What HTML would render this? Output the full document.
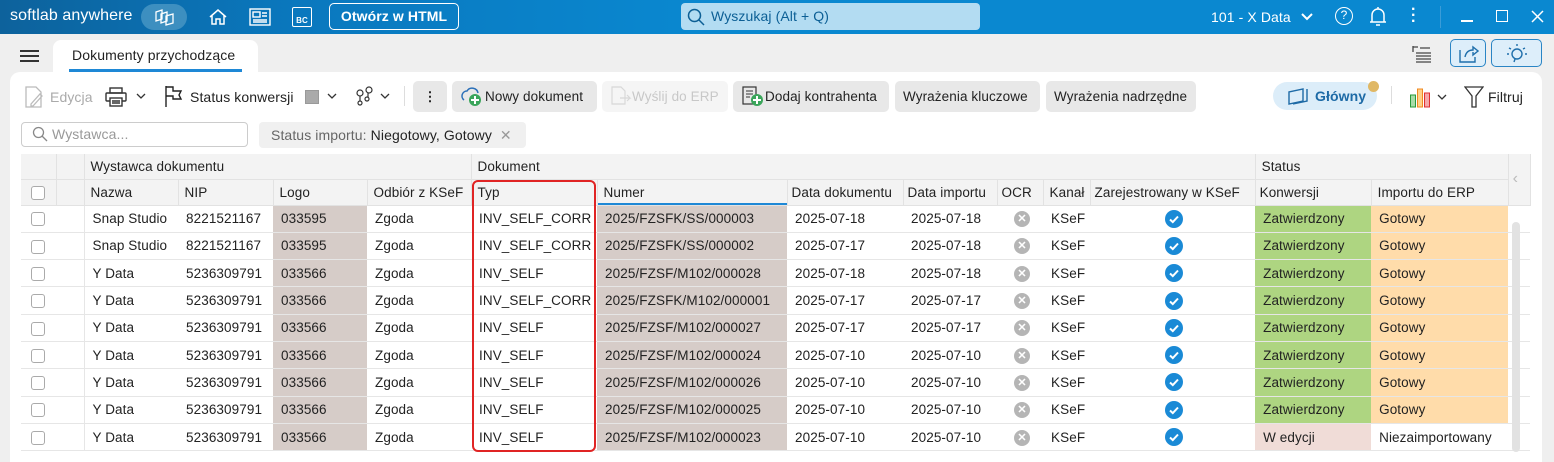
<!DOCTYPE html>
<html><head><meta charset="utf-8"><style>
*{box-sizing:border-box;margin:0;padding:0}
body{width:1554px;height:452px;overflow:hidden;background:#efefef;font-family:"Liberation Sans",sans-serif;font-size:13px;color:#222;position:relative;letter-spacing:0.1px}
.tb{position:absolute;left:0;top:0;width:1554px;height:34px;background:linear-gradient(90deg,#0d629c 0,#0a78be 300px,#0a88d0 700px,#0a88d0);color:#fff}
.abs{position:absolute}
.panel{position:absolute;left:10px;top:72px;width:1532px;height:390px;background:#fff;border-radius:10px 10px 0 0}
.btn{position:absolute;top:81px;height:31px;background:#e8e8e8;border-radius:5px;font-size:13.5px;line-height:31px;padding:0 8px;white-space:nowrap;overflow:hidden}
table{position:absolute;left:21px;top:154px;border-collapse:collapse;table-layout:fixed;width:1509px}
td{height:27.3px;border-bottom:1px solid #e6e6e6;padding-left:8px;white-space:nowrap;overflow:hidden;font-size:13.5px}
.h td{background:#f3f3f3;border-right:1px solid #e2e2e2;border-bottom:1px solid #e2e2e2;height:25.5px;padding-left:6px}
.g{background:#d6ccc8}
.k{background:#aed581}
.i{background:#ffdcaa}
.w{background:#f0dcd7}
.cb{display:inline-block;width:14px;height:14px;border:1px solid #aaa;border-radius:3px;margin-left:1px;vertical-align:middle}
.x{display:inline-block;width:16px;height:16px;border-radius:50%;background:#b5b5b5;color:#fff;font-size:11px;line-height:16px;text-align:center;font-weight:bold}
.ok{display:inline-block;vertical-align:middle}
</style></head><body>
<svg width="0" height="0" style="position:absolute"><defs><symbol id="ok" viewBox="0 0 18 18"><circle cx="9" cy="9" r="9" fill="#1a8ad6"/><path d="M5 9.5l2.8 2.6L13 6.5" fill="none" stroke="#fff" stroke-width="2"/></symbol></defs></svg>
<div class="tb">
 <div class="abs" style="left:10px;top:7px;font-size:16px">softlab anywhere</div>
 <div class="abs" style="left:141px;top:4px;width:46px;height:26px;border-radius:13px;background:#3d8fc0"></div>
 <svg class="abs" style="left:153px;top:7px" width="22" height="20" fill="none" stroke="#fff" stroke-width="1.3"><path d="M3 14V5l6-2v9zM8 16V7l6-2v9zM13 18V9l7-2v9z"/></svg>
 <svg class="abs" style="left:208px;top:7px" width="20" height="20" fill="none" stroke="#fff" stroke-width="1.5"><path d="M2 10 10 3l8 7M4 8v9h4v-5h4v5h4V8"/></svg>
 <svg class="abs" style="left:249px;top:8px" width="22" height="18" fill="none" stroke="#fff" stroke-width="1.4"><rect x="1" y="1" width="20" height="16"/><rect x="4" y="4" width="7" height="5"/><path d="M13 5h5M13 8h5M4 12h14M4 14h14"/></svg>
 <div class="abs" style="left:292px;top:7px;width:20px;height:20px;border:1.4px solid #fff;border-radius:2px;font-size:8px;font-weight:bold;text-align:center;line-height:26px">BC</div>
 <div class="abs" style="left:329px;top:3px;width:130px;height:27px;border:1.5px solid #fff;border-radius:5px;font-weight:bold;font-size:14px;text-align:center;line-height:24px">Otwórz w HTML</div>
 <div class="abs" style="left:681px;top:3px;width:299px;height:27px;background:#b3dcf2;border-radius:4px;color:#0c5f95;font-size:14px;line-height:27px;padding-left:30px">Wyszukaj (Alt + Q)</div>
 <svg class="abs" style="left:687px;top:8px" width="18" height="18" fill="none" stroke="#0c5f95" stroke-width="1.5"><circle cx="7.5" cy="7.5" r="6"/><path d="M12 12l5 5"/></svg>
 <div class="abs" style="left:1211px;top:9px;font-size:14px">101 - X Data</div>
 <svg class="abs" style="left:1301px;top:13px" width="12" height="8" fill="none" stroke="#fff" stroke-width="2"><path d="M1 1l5 5 5-5"/></svg>
 <div class="abs" style="left:1335px;top:7px;width:18px;height:18px;border:1.5px solid #fff;border-radius:50%;font-size:12px;text-align:center;line-height:15px">?</div>
 <svg class="abs" style="left:1369px;top:6px" width="18" height="21" fill="none" stroke="#fff" stroke-width="1.5"><path d="M3 16V9a6 6 0 0 1 12 0v7zM1 16h16M7 19h4M9 1v2"/></svg>
 <div class="abs" style="left:1411px;top:7px;width:3px;line-height:6px;font-size:16px;font-weight:bold">·<br>·<br>·</div>
 <div class="abs" style="left:1440px;top:6px;width:1px;height:22px;background:#3a9cd8"></div>
 <div class="abs" style="left:1461px;top:20px;width:12px;height:1.5px;background:#fff"></div>
 <div class="abs" style="left:1496px;top:10px;width:12px;height:12px;border:1.5px solid #fff"></div>
 <svg class="abs" style="left:1531px;top:10px" width="13" height="13" stroke="#fff" stroke-width="1.5"><path d="M1 1l11 11M12 1 1 12"/></svg>
</div>
<svg class="abs" style="left:20px;top:49px" width="19" height="14" stroke="#333" stroke-width="2"><path d="M0 2h19M0 7h19M0 12h19"/></svg>
<div class="abs" style="left:53px;top:40px;width:205px;height:34px;background:#fff;border-radius:8px 8px 0 0"></div>
<div class="abs" style="left:72px;top:47px;font-size:14px">Dokumenty przychodzące</div>
<div class="abs" style="left:69px;top:69px;width:173px;height:3px;background:#1e88d6"></div>
<svg class="abs" style="left:1412px;top:45px" width="20" height="18" stroke="#444" stroke-width="1.3"><path d="M1 2h5M1 1v6M8 3h10M4 8h15M4 11h15M4 14h15M4 17h15"/></svg>
<div class="abs" style="left:1450px;top:39px;width:36px;height:28px;border:1.5px solid #2a85c5;border-radius:5px;background:#ddeefa"></div>
<svg class="abs" style="left:1459px;top:45px" width="20" height="18" fill="none" stroke="#1f6fab" stroke-width="1.4"><path d="M1 5v12h15v-5M6 12c1-5 4-7 8-7V2l5 4-5 4V7"/></svg>
<div class="abs" style="left:1491px;top:39px;width:51px;height:28px;border:1.5px solid #2a85c5;border-radius:5px;background:#ddeefa"></div>
<svg class="abs" style="left:1505px;top:42px" width="24" height="22" fill="none" stroke="#1f6fab" stroke-width="1.4"><circle cx="12" cy="12" r="5"/><path d="M12 2v2M4 6l2 1M20 6l-2 1M2 12h2M20 12h2M10 17l-1 3"/></svg>
<div class="panel"></div>
<svg class="abs" style="left:24px;top:86px" width="20" height="22" fill="none" stroke="#bbb" stroke-width="1.3"><path d="M2 1h10l5 5v15H2zM7 18l9-10 2 2-9 10H7z"/></svg>
<div class="abs" style="left:50px;top:89px;color:#aaa;font-size:14px">Edycja</div>
<svg class="abs" style="left:105px;top:86px" width="22" height="22" fill="none" stroke="#333" stroke-width="1.4"><rect x="5" y="2" width="12" height="5"/><rect x="1" y="7" width="20" height="8" rx="1"/><rect x="5" y="12" width="12" height="8" fill="#fff"/><path d="M7 15h8M7 17h8"/></svg>
<svg class="abs" style="left:136px;top:93px" width="10" height="7" fill="none" stroke="#333" stroke-width="1.3"><path d="M1 1l4 4 4-4"/></svg>
<svg class="abs" style="left:164px;top:85px" width="20" height="23" fill="none" stroke="#222" stroke-width="1.4"><path d="M2 1v21M2 2h7v4h8l-2 4 2 4H9v-3H2"/></svg>
<div class="abs" style="left:190px;top:89px;font-size:14px">Status konwersji</div>
<div class="abs" style="left:305px;top:90px;width:14px;height:14px;background:#aaa;border:1px solid #999"></div>
<svg class="abs" style="left:327px;top:93px" width="10" height="7" fill="none" stroke="#333" stroke-width="1.3"><path d="M1 1l4 4 4-4"/></svg>
<svg class="abs" style="left:355px;top:85px" width="20" height="23" fill="none" stroke="#333" stroke-width="1.2"><circle cx="5" cy="8" r="3"/><circle cx="14" cy="5" r="3"/><circle cx="5" cy="18" r="2"/><circle cx="12" cy="14" r="2"/><path d="M5 11v5M13 8v4"/></svg>
<svg class="abs" style="left:380px;top:93px" width="10" height="7" fill="none" stroke="#333" stroke-width="1.3"><path d="M1 1l4 4 4-4"/></svg>
<div class="abs" style="left:404px;top:86px;width:1px;height:20px;background:#ddd"></div>
<div class="btn" style="left:413px;width:34px;text-align:center;font-weight:bold">⋮</div>
<div class="btn" style="left:452px;width:145px;padding-left:33px">Nowy dokument</div>
<svg class="abs" style="left:460px;top:85px" width="24" height="22"><path d="M4 15a5 5 0 0 1 3-9 6 6 0 0 1 11 2" fill="none" stroke="#2a6fb8" stroke-width="1.5"/><circle cx="15" cy="15" r="6" fill="#3aa55a"/><path d="M15 11v8M11 15h8" stroke="#fff" stroke-width="2"/></svg>
<div class="btn" style="left:602px;width:126px;background:#f5f5f5;color:#c8c8c8;padding-left:30px">Wyślij do ERP</div>
<svg class="abs" style="left:610px;top:86px" width="22" height="20" fill="none" stroke="#d8d8d8" stroke-width="1.2"><path d="M2 1h9l4 4v13H2zM10 12h10l-3-3M20 12l-3 3"/></svg>
<div class="btn" style="left:733px;width:156px;padding-left:32px">Dodaj kontrahenta</div>
<svg class="abs" style="left:741px;top:85px" width="24" height="22"><rect x="2" y="2" width="13" height="17" fill="none" stroke="#333" stroke-width="1.2"/><path d="M5 6h7M5 9h7M5 12h4" stroke="#333"/><circle cx="16" cy="15" r="6" fill="#3aa55a"/><path d="M16 11v8M12 15h8" stroke="#fff" stroke-width="2"/></svg>
<div class="btn" style="left:895px;width:145px">Wyrażenia kluczowe</div>
<div class="btn" style="left:1046px;width:150px">Wyrażenia nadrzędne</div>
<div class="abs" style="left:1273px;top:82px;width:104px;height:28px;background:#dcedf9;border-radius:14px;color:#1d6aa6;font-weight:bold;font-size:14px;line-height:28px;padding-left:42px">Główny</div>
<svg class="abs" style="left:1285px;top:86px" width="26" height="20" fill="none" stroke="#1d6aa6" stroke-width="1.4"><path d="M4 18V6l14-3v12zM8 18l14-3V3"/></svg>
<div class="abs" style="left:1368px;top:81px;width:11px;height:11px;border-radius:50%;background:#e0b865"></div>
<div class="abs" style="left:1391px;top:86px;width:1px;height:18px;background:#ddd"></div>
<svg class="abs" style="left:1409px;top:86px" width="22" height="22"><rect x="1.5" y="9" width="5" height="12" fill="#a8dca8" stroke="#2a9a3a"/><rect x="8.5" y="3" width="5" height="18" fill="#ffd08a" stroke="#f08a20"/><rect x="15.5" y="7" width="5" height="14" fill="#f5a8a8" stroke="#e03030"/></svg>
<svg class="abs" style="left:1437px;top:94px" width="10" height="7" fill="none" stroke="#333" stroke-width="1.3"><path d="M1 1l4 4 4-4"/></svg>
<svg class="abs" style="left:1464px;top:86px" width="20" height="22" fill="none" stroke="#333" stroke-width="1.3"><path d="M1 1h18l-7 9v11h-4V10z"/></svg>
<div class="abs" style="left:1488px;top:89px;font-size:14px">Filtruj</div>
<div class="abs" style="left:21px;top:122px;width:227px;height:25px;border:1px solid #ccc;border-radius:4px;color:#999;font-size:14px;line-height:23px;padding-left:30px">Wystawca...</div>
<svg class="abs" style="left:32px;top:126px" width="16" height="16" fill="none" stroke="#888" stroke-width="1.3"><circle cx="6.5" cy="6.5" r="5"/><path d="M10 10l5 5"/></svg>
<div class="abs" style="left:259px;top:122px;width:267px;height:26px;background:#f0f0f0;border-radius:4px;font-size:14px;line-height:26px;padding-left:12px;white-space:nowrap"><span style="color:#666">Status importu: </span>Niegotowy, Gotowy <span style="color:#999;margin-left:4px">✕</span></div>
<table>
<colgroup><col style="width:35px"><col style="width:28px"><col style="width:94px"><col style="width:95px"><col style="width:94px"><col style="width:104px"><col style="width:126px"><col style="width:190px"><col style="width:116px"><col style="width:94px"><col style="width:46px"><col style="width:47px"><col style="width:165px"><col style="width:116px"><col style="width:137px"><col style="width:22px"></colgroup>
<tr class="h"><td></td><td></td><td colspan="4">Wystawca dokumentu</td><td colspan="7">Dokument</td><td colspan="2">Status</td><td rowspan="2" style="color:#bbb;font-size:16px;padding-left:4px">‹</td></tr>
<tr class="h"><td style="padding-left:9px"><span class="cb" style="background:#fff"></span></td><td></td><td>Nazwa</td><td>NIP</td><td>Logo</td><td>Odbiór z KSeF</td><td>Typ</td><td style="box-shadow:inset 0 -2px #1e88d6">Numer</td><td style="padding-left:4px">Data dokumentu</td><td style="padding-left:4px">Data importu</td><td style="padding-left:4px">OCR</td><td>Kanał</td><td style="padding-left:4px">Zarejestrowany w KSeF</td><td style="padding-left:4px">Konwersji</td><td>Importu do ERP</td></tr>
<tr><td style="padding-left:9px"><span class="cb"></span></td><td style="border-right:1px solid #e6e6e6"></td><td>Snap Studio</td><td>8221521167</td><td class="g">033595</td><td>Zgoda</td><td>INV_SELF_CORR</td><td class="g">2025/FZSFK/SS/000003</td><td>2025-07-18</td><td>2025-07-18</td><td style="padding-left:17px"><span class="x">✕</span></td><td>KSeF</td><td style="padding-left:75px"><svg class="ok" width="18" height="18"><use href="#ok"/></svg></td><td class="k">Zatwierdzony</td><td class="i">Gotowy</td><td></td></tr>
<tr><td style="padding-left:9px"><span class="cb"></span></td><td style="border-right:1px solid #e6e6e6"></td><td>Snap Studio</td><td>8221521167</td><td class="g">033595</td><td>Zgoda</td><td>INV_SELF_CORR</td><td class="g">2025/FZSFK/SS/000002</td><td>2025-07-17</td><td>2025-07-18</td><td style="padding-left:17px"><span class="x">✕</span></td><td>KSeF</td><td style="padding-left:75px"><svg class="ok" width="18" height="18"><use href="#ok"/></svg></td><td class="k">Zatwierdzony</td><td class="i">Gotowy</td><td></td></tr>
<tr><td style="padding-left:9px"><span class="cb"></span></td><td style="border-right:1px solid #e6e6e6"></td><td>Y Data</td><td>5236309791</td><td class="g">033566</td><td>Zgoda</td><td>INV_SELF</td><td class="g">2025/FZSF/M102/000028</td><td>2025-07-18</td><td>2025-07-18</td><td style="padding-left:17px"><span class="x">✕</span></td><td>KSeF</td><td style="padding-left:75px"><svg class="ok" width="18" height="18"><use href="#ok"/></svg></td><td class="k">Zatwierdzony</td><td class="i">Gotowy</td><td></td></tr>
<tr><td style="padding-left:9px"><span class="cb"></span></td><td style="border-right:1px solid #e6e6e6"></td><td>Y Data</td><td>5236309791</td><td class="g">033566</td><td>Zgoda</td><td>INV_SELF_CORR</td><td class="g">2025/FZSFK/M102/000001</td><td>2025-07-17</td><td>2025-07-17</td><td style="padding-left:17px"><span class="x">✕</span></td><td>KSeF</td><td style="padding-left:75px"><svg class="ok" width="18" height="18"><use href="#ok"/></svg></td><td class="k">Zatwierdzony</td><td class="i">Gotowy</td><td></td></tr>
<tr><td style="padding-left:9px"><span class="cb"></span></td><td style="border-right:1px solid #e6e6e6"></td><td>Y Data</td><td>5236309791</td><td class="g">033566</td><td>Zgoda</td><td>INV_SELF</td><td class="g">2025/FZSF/M102/000027</td><td>2025-07-17</td><td>2025-07-17</td><td style="padding-left:17px"><span class="x">✕</span></td><td>KSeF</td><td style="padding-left:75px"><svg class="ok" width="18" height="18"><use href="#ok"/></svg></td><td class="k">Zatwierdzony</td><td class="i">Gotowy</td><td></td></tr>
<tr><td style="padding-left:9px"><span class="cb"></span></td><td style="border-right:1px solid #e6e6e6"></td><td>Y Data</td><td>5236309791</td><td class="g">033566</td><td>Zgoda</td><td>INV_SELF</td><td class="g">2025/FZSF/M102/000024</td><td>2025-07-10</td><td>2025-07-10</td><td style="padding-left:17px"><span class="x">✕</span></td><td>KSeF</td><td style="padding-left:75px"><svg class="ok" width="18" height="18"><use href="#ok"/></svg></td><td class="k">Zatwierdzony</td><td class="i">Gotowy</td><td></td></tr>
<tr><td style="padding-left:9px"><span class="cb"></span></td><td style="border-right:1px solid #e6e6e6"></td><td>Y Data</td><td>5236309791</td><td class="g">033566</td><td>Zgoda</td><td>INV_SELF</td><td class="g">2025/FZSF/M102/000026</td><td>2025-07-10</td><td>2025-07-10</td><td style="padding-left:17px"><span class="x">✕</span></td><td>KSeF</td><td style="padding-left:75px"><svg class="ok" width="18" height="18"><use href="#ok"/></svg></td><td class="k">Zatwierdzony</td><td class="i">Gotowy</td><td></td></tr>
<tr><td style="padding-left:9px"><span class="cb"></span></td><td style="border-right:1px solid #e6e6e6"></td><td>Y Data</td><td>5236309791</td><td class="g">033566</td><td>Zgoda</td><td>INV_SELF</td><td class="g">2025/FZSF/M102/000025</td><td>2025-07-10</td><td>2025-07-10</td><td style="padding-left:17px"><span class="x">✕</span></td><td>KSeF</td><td style="padding-left:75px"><svg class="ok" width="18" height="18"><use href="#ok"/></svg></td><td class="k">Zatwierdzony</td><td class="i">Gotowy</td><td></td></tr>
<tr><td style="padding-left:9px"><span class="cb"></span></td><td style="border-right:1px solid #e6e6e6"></td><td>Y Data</td><td>5236309791</td><td class="g">033566</td><td>Zgoda</td><td>INV_SELF</td><td class="g">2025/FZSF/M102/000023</td><td>2025-07-10</td><td>2025-07-10</td><td style="padding-left:17px"><span class="x">✕</span></td><td>KSeF</td><td style="padding-left:75px"><svg class="ok" width="18" height="18"><use href="#ok"/></svg></td><td class="w">W edycji</td><td>Niezaimportowany</td><td></td></tr>
</table>
<div class="abs" style="left:1512px;top:222px;width:8px;height:230px;background:#e2e2e2;border-radius:4px"></div>
<div class="abs" style="left:472px;top:180px;width:124px;height:272px;border:2px solid #e02424;border-radius:6px"></div>
</body></html>
